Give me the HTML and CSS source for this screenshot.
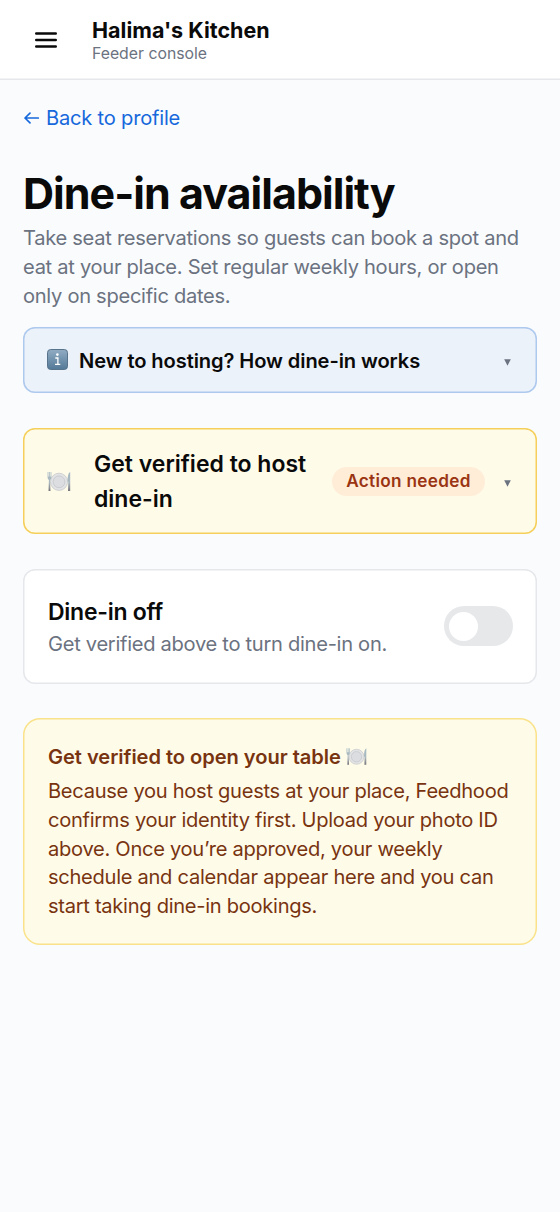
FILE: index.html
```html
<!DOCTYPE html>
<html lang="en">
<head>
<meta charset="utf-8">
<title>Dine-in availability</title>
<link rel="stylesheet" href="styles.css">
</head>
<body>
<svg class="defs" aria-hidden="true">
  <defs>
    <linearGradient id="tile" x1="0" y1="0" x2="0" y2="1"><stop offset="0" stop-color="#91acc3"/><stop offset="1" stop-color="#537998"/></linearGradient>
    <linearGradient id="steel" x1="0" y1="0" x2="0" y2="1"><stop offset="0" stop-color="#a3b9c3"/><stop offset="0.55" stop-color="#aab8bf"/><stop offset="1" stop-color="#77747b"/></linearGradient>
    <symbol id="plate" viewBox="0 0 24 21">
      <circle cx="12" cy="10.8" r="8.6" fill="#e2e3e4" stroke="#c8c9cb" stroke-width=".8"/>
      <circle cx="12" cy="10.8" r="5.9" fill="#dcdde1" stroke="#c3c5ca" stroke-width=".8"/>
      <path d="M.6 1v5c0 2 .7 2.6 1.3 2.9L1.5 20h2L3 8.9c.8-.4 1.4-1 1.4-2.9V1h-.8v4.6h-.7V1h-.8v4.6h-.7V1z" fill="url(#steel)"/>
      <path d="M23.2 1c-1.8.8-2.7 4.500-2.600 9.800h.7L21 20h2.200z" fill="url(#steel)"/>
    </symbol>
  </defs>
</svg>
<header class="topbar">
  <svg class="menu" viewBox="0 0 24 18"><path d="M2.200 2.500h19.600M2.200 9h19.600M2.200 15.500h19.600"/></svg>
  <div>
    <div class="brand">Halima's Kitchen</div>
    <div class="role">Feeder console</div>
  </div>
</header>
<main class="page">
  <a class="back"><svg class="arrow" viewBox="0 0 17 16"><path d="M15.300 8H2M7 3.200 2 8l5 4.800"/></svg><span>Back to profile</span></a>
  <h1 class="title">Dine-in availability</h1>
  <p class="body lead">Take seat reservations so guests can book a spot and<br>eat at your place. Set regular weekly hours, or open<br>only on specific dates.</p>

  <section class="card info">
    <svg class="info-icon" viewBox="0 0 21 21"><rect x=".5" y=".5" width="20" height="20" rx="3.200" fill="url(#tile)" stroke="#58748c"/><circle cx="10.400" cy="5.600" r="1.300" fill="#fff"/><path d="M8.300 9h2.600v6.300M8 15.400h5.300" fill="none" stroke="#fff" stroke-width="1.300"/></svg>
    <span class="info-title">New to hosting? How dine-in works</span>
    <svg class="caret" viewBox="0 0 7 7"><path d="M.2.2h6.600L3.500 6.800z"/></svg>
  </section>

  <section class="card verify">
    <svg class="plate"><use href="#plate"/></svg>
    <h2 class="heading verify-title">Get verified to host<br>dine-in</h2>
    <span class="badge">Action needed</span>
    <svg class="caret" viewBox="0 0 7 7"><path d="M.2.2h6.600L3.500 6.800z"/></svg>
  </section>

  <section class="card status">
    <div>
      <h2 class="heading status-title">Dine-in off</h2>
      <p class="body">Get verified above to turn dine-in on.</p>
    </div>
    <div class="toggle"><span class="knob"></span></div>
  </section>

  <section class="card notice">
    <h3 class="notice-title"><span>Get verified to open your table</span><svg class="plate small"><use href="#plate"/></svg></h3>
    <p class="body notice-text">Because you host guests at your place, Feedhood<br>confirms your identity first. Upload your photo ID<br>above. Once you’re approved, your weekly<br>schedule and calendar appear here and you can<br>start taking dine-in bookings.</p>
  </section>
</main>
</body>
</html>
```
FILE: styles.css
```css
* { box-sizing: border-box; }
body { margin: 0; min-height: 1212px; background: #f9fbfd; color: #0a0a0a; font-family: Inter, "Liberation Sans", sans-serif; white-space: nowrap; }
h1, h2, h3, p { margin: 0; }
svg { display: block; flex: none; }
.defs { position: absolute; width: 0; height: 0; }

.topbar { display: flex; align-items: center; gap: 34px; height: 80px; padding: 1px 34px 0; background: #fff; box-shadow: inset 0 -1.500px #e5e7eb; }
.menu { width: 24px; height: 18px; margin-top: -1px; fill: none; stroke: #0a0a0a; stroke-width: 2.400; stroke-linecap: round; }
.brand { font-size: 21.500px; line-height: 26px; font-weight: 650; letter-spacing: .020px; }
.role { font-size: 15.800px; line-height: 21px; color: #6b7280; }

.page { padding: 24px 23px 0; }
.back { display: flex; align-items: center; gap: 6px; height: 29px; color: #1668dc; font-size: 20.100px; line-height: 29px; letter-spacing: -.2px; }
.arrow { width: 17px; height: 16px; margin-top: -2px; fill: none; stroke: currentColor; stroke-width: 1.700; stroke-linecap: round; stroke-linejoin: round; }
.title { margin-top: 34px; font-size: 43px; line-height: 52px; font-weight: 720; letter-spacing: -.980px; }
.body { font-size: 20.100px; line-height: 28.750px; letter-spacing: -.285px; color: #6b7280; }
.lead { margin-top: 5.300px; }

.card { display: flex; align-items: center; border-radius: 12px; background: #fff; padding: 0 25px; --edge: #e5e7eb; box-shadow: inset 0 0 0 1.500px var(--edge); }
.info { height: 66px; margin-top: 16.700px; padding-left: 24px; background: #ecf2fa; --edge: #adc9ee; }
.info-icon { width: 21px; height: 21px; margin: -1px 11px 0 0; }
.info-title { margin-top: 1px; font-size: 20.100px; font-weight: 620; letter-spacing: -.090px; }
.caret { width: 7px; height: 7px; margin: 4px 1px 0 auto; fill: #6b7280; }
.verify { height: 106px; margin-top: 35px; padding-left: 24px; background: #fffbe9; --edge: #f5cf5a; }
.plate { width: 24px; height: 21px; }
.heading { font-size: 23px; line-height: 34.500px; font-weight: 620; }
.verify-title { width: 238px; margin-left: 23px; padding-top: 1px; }
.badge { width: 153px; height: 29px; border-radius: 15px; background: #ffedd8; color: #9a3412; font-size: 17.200px; line-height: 28px; font-weight: 620; letter-spacing: .300px; text-align: center; }
.status { justify-content: space-between; height: 115px; margin-top: 35px; padding-right: 24px; }
.status-title { padding-bottom: 1px; letter-spacing: -.260px; }
.toggle { width: 69px; height: 40px; margin-top: -1px; padding: 5.500px 5px; border-radius: 20px; background: #e6e8ea; }
.knob { display: block; width: 29px; height: 29px; border-radius: 50%; background: #fff; }
.notice { display: block; height: 227px; margin-top: 34px; padding-top: 25px; border-radius: 17px; background: #fffbe9; --edge: #fae28a; }
.notice-title { display: flex; align-items: center; gap: 5px; height: 29px; color: #783410; font-size: 20.100px; line-height: 29px; font-weight: 620; letter-spacing: -.040px; }
.small { width: 21px; height: 19px; margin-top: -2px; }
.notice-text { margin-top: 5px; color: #783410; }
```
